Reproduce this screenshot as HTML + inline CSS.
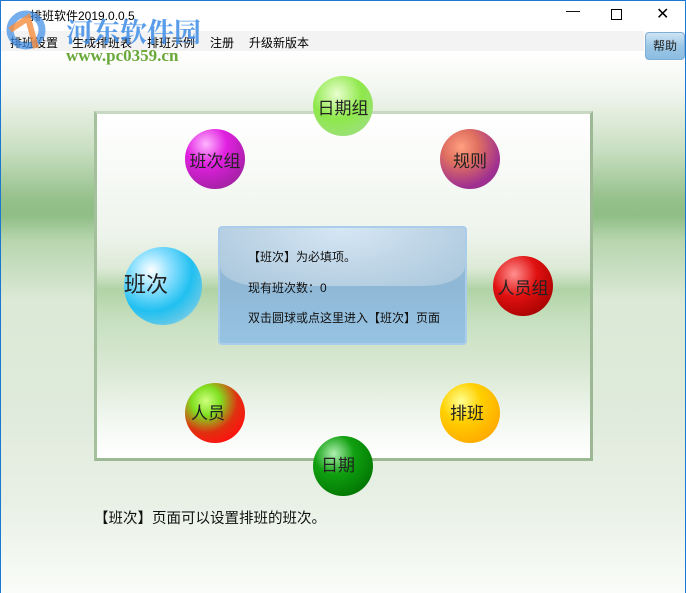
<!DOCTYPE html>
<html><head><meta charset="utf-8"><style>
*{margin:0;padding:0;box-sizing:border-box}
body{width:686px;height:593px;overflow:hidden;position:relative;font-family:"Liberation Sans","Noto Sans CJK SC",sans-serif;
background:linear-gradient(to bottom,#fff 0px,#fff 52px,#f2f6f0 90px,#c9dfc2 150px,#94c08a 200px,#8fbd85 215px,#b6d5ae 240px,#dbe9d6 300px,#dfeadb 400px,#e8f0e5 500px,#fafcf9 593px);}
.frame{position:absolute;inset:0;border:1px solid #1b78d0;border-bottom:none}
.title{position:absolute;left:0;top:0;width:686px;height:31px;background:#fff}
.title span{position:absolute;left:30px;top:7px;font-size:12px;color:#000}
.ctl{position:absolute;top:6px;font-size:14px;color:#000}
.menu{position:absolute;left:1px;top:31px;width:643px;height:20px;background:#f3f3f3;font-size:12px}
.menu span{position:absolute;top:3px;color:#000}
.help{position:absolute;left:645px;top:32px;width:40px;height:28px;border-radius:4px;background:linear-gradient(#cfe4f4,#9cc7e6 50%,#8bbde2);border:1px solid #7eaed3;font-size:12px;text-align:center;line-height:26px;color:#222}
.panel{position:absolute;left:94px;top:111px;width:499px;height:350px;border:3px solid #9db894;border-top-color:#c8d8c2;border-left-color:#a5c09c;
background:linear-gradient(to bottom,#fff 0%,#eef4ec 35%,#dcead6 45%,#b0d3a6 51%,#c7e0c0 60%,#dbe9d6 75%,#f6faf5 92%,#fff 100%);}
.ball{position:absolute;border-radius:50%;display:flex;align-items:center;justify-content:center;font-size:17px;color:#222;white-space:nowrap}
.info{position:absolute;left:218px;top:226px;width:249px;height:119px;border:2px solid #a9cdea;border-radius:4px;overflow:hidden;
background:linear-gradient(to bottom,#9dc0db 0%,#8fb8d6 50%,#97c3e2 100%);font-size:12px;color:#111}
.gloss{position:absolute;left:0;top:0;width:245px;height:58px;border-radius:0 0 40px 40px/0 0 20px 20px;background:radial-gradient(ellipse at 50% 0%,#d6e7f4,#b6cfe2 70%,#a9c6dc)}
.info div.t{position:absolute;left:28px}
.bottom{position:absolute;left:94px;top:507px;font-size:14.5px;color:#111}
.wm1{position:absolute;left:66px;top:11px;font-size:27px;font-weight:bold;color:rgba(60,140,230,.85);font-family:"Noto Serif CJK SC",serif}
.wm2{position:absolute;left:66px;top:46px;font-size:17px;font-weight:bold;color:#6aa83a;font-family:"Liberation Serif",serif}
</style></head><body>
<div class="title"><span>排班软件2019.0.0.5</span>
<div class="ctl" style="left:566px;top:2px">—</div>
<div style="position:absolute;left:611px;top:9px;width:11px;height:11px;border:1px solid #000"></div>
<div class="ctl" style="left:656px;top:4px;font-size:16px">✕</div></div>
<div class="menu"><span style="left:9px">排班设置</span><span style="left:71px">生成排班表</span><span style="left:146px">排班示例</span><span style="left:209px">注册</span><span style="left:248px">升级新版本</span></div>
<div class="help">帮助</div>
<svg style="position:absolute;left:6px;top:8px" width="60" height="60"><circle cx="20" cy="22" r="16" fill="none" stroke="rgba(60,140,230,.7)" stroke-width="7"/><path d="M4 22 L22 10 L30 40" stroke="rgba(245,140,60,.8)" stroke-width="6" fill="none"/></svg>
<div class="wm1">河东软件园</div>
<div class="wm2">www.pc0359.cn</div>
<div class="panel"></div>
<div class="ball" style="left:313px;top:76px;width:60px;height:60px;background:radial-gradient(circle at 40% 30%,#e9ffd0,#8ee84a 45%,#9be07a 80%,#b8eaa8)">日期组</div>
<div class="ball" style="left:185px;top:129px;width:60px;height:60px;background:radial-gradient(circle at 35% 25%,#ffb4ff,#e020e0 35%,#b020b0 70%,#8a2a8a)">班次组</div>
<div class="ball" style="left:440px;top:129px;width:60px;height:60px;background:radial-gradient(circle at 35% 30%,#ffa080,#e07060 30%,#a03090 70%,#8a2a8a)">规则</div>
<div class="ball" style="left:124px;top:247px;width:78px;height:78px;background:radial-gradient(circle at 35% 30%,#fff,#8fe0ff 25%,#20c0f0 55%,#60c8e8 75%,#b8dce0 85%);font-size:22px;justify-content:flex-start;padding-bottom:6px">班次</div>
<div class="ball" style="left:493px;top:256px;width:60px;height:60px;background:radial-gradient(circle at 35% 30%,#ff9090,#e01010 40%,#a00000 85%)">人员组</div>
<div class="ball" style="left:185px;top:383px;width:60px;height:60px;background:radial-gradient(circle at 35% 30%,#d0ff80,#80e020 25%,#e03010 55%,#ff1010 80%);padding-right:14px;padding-bottom:4px">人员</div>
<div class="ball" style="left:440px;top:383px;width:60px;height:60px;background:radial-gradient(circle at 35% 30%,#ffff90,#ffd000 35%,#ffa800 80%);padding-right:6px;padding-bottom:4px">排班</div>
<div class="ball" style="left:313px;top:436px;width:60px;height:60px;background:radial-gradient(circle at 35% 30%,#b0f0b0,#10a010 35%,#007000 85%);padding-right:10px;padding-bottom:6px">日期</div>
<div class="info"><div class="gloss"></div><div class="t" style="top:20px">【班次】为必填项。</div><div class="t" style="top:51px">现有班次数：0</div><div class="t" style="top:81px">双击圆球或点这里进入【班次】页面</div></div>
<div class="bottom">【班次】页面可以设置排班的班次。</div>
<div class="frame"></div>
</body></html>
